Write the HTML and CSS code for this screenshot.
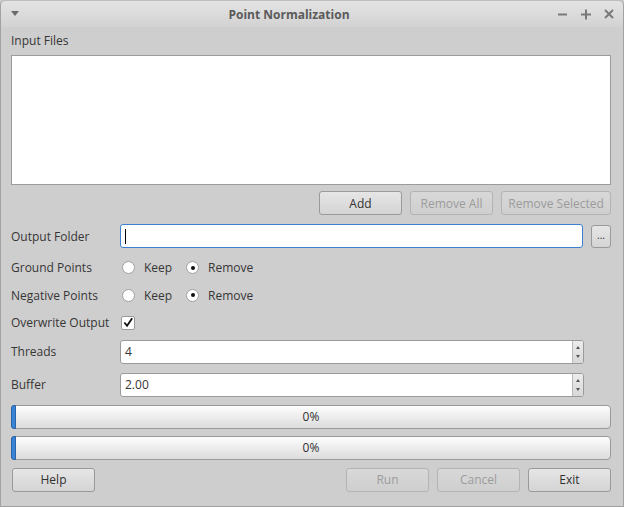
FILE: index.html
```html
<!DOCTYPE html>
<html>
<head>
<meta charset="utf-8">
<link rel="stylesheet" href="styles.css">
</head>
<body>
<div class="window">
  <div class="titlebar">
    <span class="menu-tri"></span>
    <span class="title">Point Normalization</span>
    <span class="wbtns">
      <svg width="12" height="12" viewBox="0 0 12 12"><path d="M1 6.5h9" stroke="#7a7a7a" stroke-width="2"/></svg>
      <svg width="12" height="12" viewBox="0 0 12 12"><path d="M1 6.5h10M6 1.5v10" stroke="#7a7a7a" stroke-width="2"/></svg>
      <svg width="12" height="12" viewBox="0 0 12 12"><path d="M2 2l8 8M10 2l-8 8" stroke="#7a7a7a" stroke-width="2"/></svg>
    </span>
  </div>
  <div class="content">
    <div class="label-top">Input Files</div>
    <div class="listbox"></div>
    <div class="btnrow">
      <button class="btn">Add</button>
      <button class="btn disabled">Remove All</button>
      <button class="btn disabled wide">Remove Selected</button>
    </div>
    <div class="row r-output">
      <span class="lbl">Output Folder</span>
      <div class="lineedit focus"><span class="caret"></span></div>
      <button class="btn dots">...</button>
    </div>
    <div class="row r-radio first-radio">
      <span class="lbl">Ground Points</span>
      <span class="radio"></span><span class="opt">Keep</span>
      <span class="radio on"></span><span class="opt">Remove</span>
    </div>
    <div class="row r-radio">
      <span class="lbl">Negative Points</span>
      <span class="radio"></span><span class="opt">Keep</span>
      <span class="radio on"></span><span class="opt">Remove</span>
    </div>
    <div class="row r-radio">
      <span class="lbl">Overwrite Output</span>
      <span class="check"><svg width="13" height="13" viewBox="0 0 13 13"><path d="M2.5 6.5l3 3.5 5.5-8" fill="none" stroke="#111" stroke-width="2"/></svg></span>
    </div>
    <div class="row r-spin">
      <span class="lbl">Threads</span>
      <div class="spin"><span class="val">4</span><span class="arrows"><i class="up"></i><i class="down"></i></span></div>
    </div>
    <div class="row r-spin second">
      <span class="lbl">Buffer</span>
      <div class="spin"><span class="val">2.00</span><span class="arrows"><i class="up"></i><i class="down"></i></span></div>
    </div>
    <div class="progress first"><span class="chunk"></span>0%</div>
    <div class="progress"><span class="chunk"></span>0%</div>
    <div class="bottom">
      <button class="btn">Help</button>
      <span class="spacer"></span>
      <button class="btn disabled">Run</button>
      <button class="btn disabled">Cancel</button>
      <button class="btn">Exit</button>
    </div>
  </div>
</div>
</body>
</html>
```

FILE: styles.css
```css
html, body {
  margin: 0;
  padding: 0;
  background: #cecece;
}
body {
  font-family: "Open Sans", "Noto Sans", sans-serif;
  font-size: 12px;
  color: #363636;
}
.window {
  width: 624px;
  height: 507px;
  box-sizing: border-box;
  border: 1px solid #a2a2a2;
  border-top: none;
  border-radius: 5px 5px 0 0;
  background: #cecece;
  overflow: hidden;
}
.titlebar {
  height: 27px;
  display: flex;
  align-items: center;
  position: relative;
  background: linear-gradient(#e4e4e4, #d2d2d2);
  border-top: 1px solid #bdbdbd;
  box-sizing: border-box;
  border-radius: 5px 5px 0 0;
}
.menu-tri {
  position: absolute;
  left: 10px;
  top: 10px;
  width: 0;
  height: 0;
  border-left: 4px solid transparent;
  border-right: 4px solid transparent;
  border-top: 5px solid #6a6a6a;
}
.title {
  flex: 1;
  text-align: center;
  font-weight: bold;
  font-size: 12px;
  color: #5a5a5a;
  padding-right: 46px;
}
.wbtns {
  position: absolute;
  right: 8px;
  top: 7px;
  display: flex;
  gap: 11px;
}
.content {
  padding: 0 12px 0 10px;
}
.label-top {
  height: 28px;
  display: flex;
  align-items: center;
  padding-bottom: 1px;
  box-sizing: border-box;
}
.listbox {
  height: 130px;
  box-sizing: border-box;
  background: #fff;
  border: 1px solid #9c9c9c;
}
.btnrow {
  margin-top: 6px;
  display: flex;
  justify-content: flex-end;
  gap: 8px;
}
.btn {
  font-family: inherit;
  font-size: 12px;
  color: #303030;
  width: 83px;
  height: 24px;
  box-sizing: border-box;
  border: 1px solid #9a9a9a;
  border-radius: 3px;
  background: linear-gradient(#e6e6e6, #d4d4d4);
  padding: 0;
  margin: 0;
}
.btn.disabled {
  color: #9c9c9c;
  border-color: #b4b4b4;
  background: linear-gradient(#d8d8d8, #cfcfcf);
}
.btn.wide {
  width: 110px;
}
.row {
  display: flex;
  align-items: center;
}
.lbl {
  width: 109px;
  flex: none;
}
.r-output {
  margin-top: 9px;
  height: 24px;
}
.lineedit {
  flex: 1;
  height: 24px;
  box-sizing: border-box;
  background: #fff;
  border: 1px solid #9a9a9a;
  border-radius: 3px;
  display: flex;
  align-items: center;
  padding-left: 4px;
}
.lineedit.focus {
  border-color: #3d80cf;
}
.caret {
  width: 1px;
  height: 15px;
  background: #000;
}
.btn.dots {
  width: 20px;
  height: 23px;
  margin-left: 8px;
  font-size: 10px;
  line-height: 1;
  padding-bottom: 2px;
}
.r-radio {
  height: 27.5px;
}
.r-radio.first-radio {
  margin-top: 6px;
}
.radio {
  width: 13px;
  height: 13px;
  box-sizing: border-box;
  border-radius: 50%;
  border: 1px solid #a0a0a0;
  background: #fff;
  margin-left: 2px;
  margin-right: 9px;
  position: relative;
  flex: none;
}
.radio.on::after {
  content: "";
  position: absolute;
  left: 3.5px;
  top: 3.5px;
  width: 4px;
  height: 4px;
  border-radius: 50%;
  background: #111;
}
.opt {
  width: 40px;
}
.check {
  width: 14px;
  height: 14px;
  box-sizing: border-box;
  border: 1px solid #999;
  background: #fff;
  border-radius: 2px;
  margin-left: 1px;
  display: flex;
  align-items: center;
  justify-content: center;
}
.r-spin {
  margin-top: 3px;
  height: 24px;
}
.r-spin.second {
  margin-top: 9px;
}
.spin {
  width: 464px;
  height: 24px;
  box-sizing: border-box;
  background: #fff;
  border: 1px solid #9a9a9a;
  border-radius: 3px;
  display: flex;
  align-items: stretch;
}
.spin .val {
  flex: 1;
  display: flex;
  align-items: center;
  padding-left: 4px;
}
.arrows {
  width: 11px;
  border-left: 1px solid #b8b8b8;
  background: linear-gradient(#ececec, #d8d8d8);
  border-radius: 0 2px 2px 0;
  display: flex;
  flex-direction: column;
  align-items: center;
  justify-content: space-between;
  padding: 5px 0 5px;
  box-sizing: border-box;
}
.arrows i {
  width: 0;
  height: 0;
  border-left: 2px solid transparent;
  border-right: 2px solid transparent;
}
.arrows .up { border-bottom: 3px solid #555; }
.arrows .down { border-top: 3px solid #555; }
.progress {
  margin-top: 7px;
  height: 24px;
  box-sizing: border-box;
  border: 1px solid #9a9a9a;
  border-radius: 4px;
  background: linear-gradient(#fdfdfd, #dcdcdc);
  display: flex;
  align-items: center;
  justify-content: center;
  position: relative;
  color: #303030;
}
.progress.first {
  margin-top: 8px;
}
.chunk {
  position: absolute;
  left: -1px;
  top: -1px;
  bottom: -1px;
  width: 3px;
  background: #3b83d6;
  border: 1px solid #2a62a8;
  border-radius: 3px 0 0 3px;
}
.bottom {
  margin-top: 8px;
  display: flex;
  gap: 8px;
  padding-left: 1px;
}
.spacer {
  flex: 1;
}
```
